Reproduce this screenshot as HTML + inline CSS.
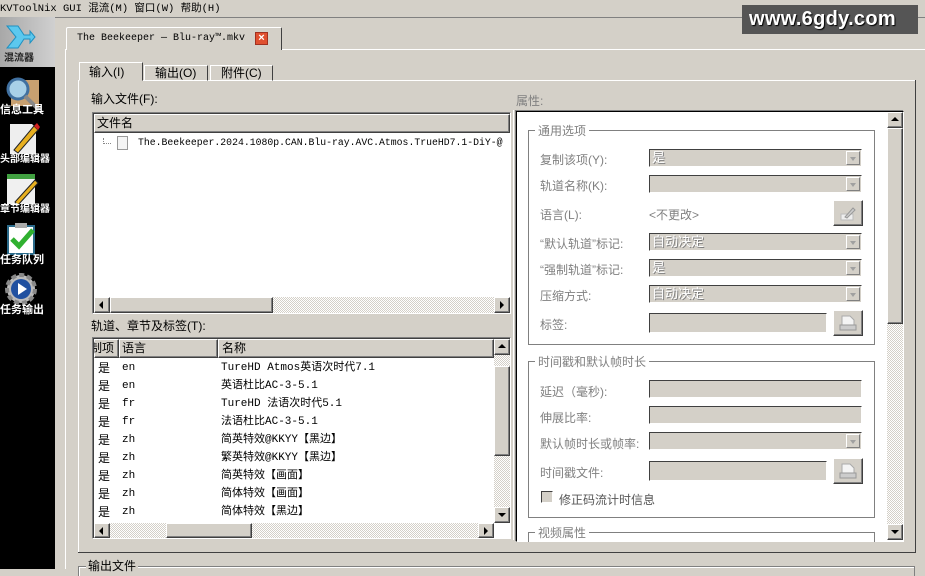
<!DOCTYPE html>
<html><head><meta charset="utf-8"><style>
*{box-sizing:border-box;margin:0;padding:0}
body{width:925px;height:569px;overflow:hidden;background:#d4d0c8;position:relative;font-family:"Liberation Sans","Noto Sans CJK SC",sans-serif;font-size:12px;color:#000}
.a{position:absolute}
.t{position:absolute;white-space:nowrap;line-height:14px}
.sunk{border:1px solid;border-color:#808080 #fff #fff #808080;box-shadow:inset 1px 1px 0 #404040}
.btn{background:#d4d0c8;border:1px solid;border-color:#fff #404040 #404040 #fff;box-shadow:inset -1px -1px 0 #808080}
.track{background:repeating-conic-gradient(#d4d0c8 0 25%,#fff 0 50%) 0 0/2px 2px}
.combo{position:absolute;height:18px;background:#d4d0c8;border:1px solid;border-color:#404040 #fff #fff #404040;color:#fff;font-size:13px;line-height:15px;padding-left:2px;text-shadow:1px 1px 0 #808080}
.combo .dd{position:absolute;right:1px;top:1px;width:14px;height:14px;background:#d4d0c8;border:1px solid;border-color:#fff #808080 #808080 #fff}
.combo .dd:after{content:"";position:absolute;left:3px;top:5px;border:3px solid transparent;border-top:4px solid #a0a0a0}
.lbl{position:absolute;color:#808080;font-size:12px;white-space:nowrap}
.row{position:absolute;left:0;height:18px;font-size:11px;line-height:18px;white-space:nowrap}
.mono{font-family:"Liberation Mono","Noto Sans CJK SC",monospace}
</style></head><body>
<!-- menu -->
<div class="t" style="left:0;top:2px;font-family:'Liberation Mono','Noto Sans CJK SC',monospace;font-size:10.5px">KVToolNix GUI&nbsp;混流(M)&nbsp;窗口(W)&nbsp;帮助(H)</div>
<div class="a" style="left:55px;top:17px;width:870px;height:1px;background:#808080"></div>
<div class="a" style="left:742px;top:5px;width:176px;height:29px;background:#555"></div>
<div class="t" style="left:749px;top:9px;color:#fff;font-weight:bold;font-size:20px;line-height:20px;letter-spacing:0.3px;text-shadow:1px 1px 1px #000">www.6gdy.com</div>

<!-- sidebar -->
<div class="a" style="left:0;top:17px;width:55px;height:552px;background:#000"></div>
<div class="a" style="left:0;top:17px;width:55px;height:50px;background:linear-gradient(90deg,#a8a8a8,#d0d0d0)"></div>
<svg class="a" style="left:4px;top:22px" width="32" height="30"><path d="M3 4 L14 4 L20 13 L26 13 L26 9 L31 15 L26 21 L26 17 L20 17 L14 26 L3 26 L12 15 Z" fill="#5cc8ee" stroke="#2090c0"/></svg>
<div class="t" style="left:4px;top:52px;color:#222;font-size:10px;font-weight:bold">混流器</div>
<svg class="a" style="left:3px;top:74px" width="38" height="40"><rect x="8" y="6" width="28" height="26" fill="#c8a070"/><circle cx="15" cy="15" r="10" fill="#a8d0e8" stroke="#4070a0" stroke-width="3"/><line x1="22" y1="22" x2="36" y2="36" stroke="#888" stroke-width="4"/></svg>
<div class="t" style="left:0;top:103px;color:#fff;font-size:11px;font-weight:bold">信息工具</div>
<svg class="a" style="left:6px;top:120px" width="34" height="36"><path d="M4 4 H26 L30 8 V34 H4Z" fill="#eee"/><path d="M8 30 L28 6 L32 10 L12 33Z" fill="#e8b020" stroke="#222"/><path d="M28 6 L31 3 L34 7 L32 10Z" fill="#d02020"/></svg>
<div class="t" style="left:0;top:153px;color:#fff;font-size:10px;font-weight:bold">头部编辑器</div>
<svg class="a" style="left:5px;top:172px" width="34" height="34"><rect x="2" y="4" width="28" height="28" fill="#f0f0f0"/><rect x="2" y="2" width="28" height="5" fill="#40a040"/><path d="M10 30 L30 8 L33 11 L13 33Z" fill="#e8b020" stroke="#222"/></svg>
<div class="t" style="left:0;top:203px;color:#fff;font-size:10px;font-weight:bold">章节编辑器</div>
<svg class="a" style="left:6px;top:222px" width="30" height="34"><rect x="2" y="4" width="26" height="28" fill="#fff" stroke="#2a6a8a" stroke-width="2"/><rect x="9" y="1" width="12" height="5" fill="#aaa"/><path d="M6 17 L13 24 L27 8" fill="none" stroke="#30b030" stroke-width="5"/></svg>
<div class="t" style="left:0;top:253px;color:#fff;font-size:11px;font-weight:bold">任务队列</div>
<svg class="a" style="left:3px;top:272px" width="36" height="34"><circle cx="18" cy="17" r="14" fill="#bbb" stroke="#888" stroke-width="4" stroke-dasharray="5 3"/><circle cx="18" cy="17" r="10" fill="#2050a0"/><path d="M15 11 L24 17 L15 23Z" fill="#fff"/></svg>
<div class="t" style="left:0;top:303px;color:#fff;font-size:11px;font-weight:bold">任务输出</div>

<!-- doc tab & panel -->
<div class="a" style="left:65px;top:49px;width:870px;height:1px;background:#fff"></div>
<div class="a" style="left:65px;top:49px;width:1px;height:520px;background:#fff"></div>
<div class="a" style="left:66px;top:27px;width:216px;height:23px;background:#d4d0c8;border-left:1px solid #fff;border-top:1px solid #fff;border-right:1px solid #404040;border-radius:2px 2px 0 0"></div>
<div class="t mono" style="left:77px;top:32px;font-size:10px">The Beekeeper — Blu-ray™.mkv</div>
<div class="a" style="left:255px;top:32px;width:13px;height:13px;background:#e05030;border:1px solid #a03020;color:#fff;font-size:11px;line-height:10px;text-align:center;font-weight:bold">×</div>

<!-- inner tabs -->
<div class="a" style="left:78px;top:80px;width:837px;height:1px;background:#fff"></div>
<div class="a" style="left:78px;top:80px;width:1px;height:473px;background:#fff"></div>
<div class="a" style="left:78px;top:552px;width:837px;height:1px;background:#404040"></div>
<div class="a" style="left:915px;top:80px;width:1px;height:473px;background:#404040"></div>
<div class="a" style="left:79px;top:62px;width:64px;height:19px;background:#d4d0c8;border:1px solid;border-color:#fff #404040 transparent #fff"></div>
<div class="a" style="left:144px;top:65px;width:64px;height:16px;border:1px solid;border-color:#fff #404040 transparent #fff"></div>
<div class="a" style="left:210px;top:65px;width:63px;height:16px;border:1px solid;border-color:#fff #404040 transparent #fff"></div>
<div class="t" style="left:89px;top:65px">输入(I)</div>
<div class="t" style="left:155px;top:66px">输出(O)</div>
<div class="t" style="left:221px;top:66px">附件(C)</div>

<!-- input files -->
<div class="t" style="left:91px;top:92px">输入文件(F):</div>
<div class="a sunk" style="left:92px;top:112px;width:419px;height:202px;background:#fff"></div>
<div class="a btn" style="left:94px;top:114px;width:416px;height:19px"></div>
<div class="t" style="left:97px;top:116px">文件名</div>
<div class="a" style="left:103px;top:138px;width:8px;height:6px;border-left:1px dotted #888;border-bottom:1px dotted #888"></div>
<div class="a" style="left:117px;top:136px;width:11px;height:14px;border:1px solid #999;background:#f4f4f4"></div>
<div class="a" style="left:136px;top:134px;width:374px;height:16px;overflow:hidden"><div class="t mono" style="left:2px;top:2px;font-size:9.8px">The.Beekeeper.2024.1080p.CAN.Blu-ray.AVC.Atmos.TrueHD7.1-DiY-@</div></div>
<div class="a track" style="left:94px;top:297px;width:416px;height:16px"></div>
<div class="a btn" style="left:94px;top:297px;width:16px;height:16px"></div>
<div class="a" style="left:99px;top:301px;border:4px solid transparent;border-right:4px solid #000;border-left:0"></div>
<div class="a btn" style="left:110px;top:297px;width:163px;height:16px"></div>
<div class="a btn" style="left:494px;top:297px;width:16px;height:16px"></div>
<div class="a" style="left:500px;top:301px;border:4px solid transparent;border-left:4px solid #000;border-right:0"></div>

<!-- tracks -->
<div class="t" style="left:91px;top:319px">轨道、章节及标签(T):</div>
<div class="a sunk" style="left:92px;top:337px;width:419px;height:202px;background:#fff"></div>
<div class="a btn" style="left:94px;top:339px;width:25px;height:19px"></div>
<div class="a btn" style="left:119px;top:339px;width:99px;height:19px"></div>
<div class="a btn" style="left:218px;top:339px;width:276px;height:19px"></div>
<div class="a" style="left:94px;top:341px;width:24px;height:15px;overflow:hidden"><div class="t" style="left:-4px;top:0">制项</div></div>
<div class="t" style="left:122px;top:341px">语言</div>
<div class="t" style="left:222px;top:341px">名称</div>
<div class="a" style="left:94px;top:359px;width:400px;height:162px">
<div class="row" style="top:0"><span style="position:absolute;left:4px;font-size:12px">是</span><span class="mono" style="position:absolute;left:28px">en</span><span class="mono" style="position:absolute;left:127px">TureHD Atmos英语次时代7.1</span></div>
<div class="row" style="top:18px"><span style="position:absolute;left:4px;font-size:12px">是</span><span class="mono" style="position:absolute;left:28px">en</span><span class="mono" style="position:absolute;left:127px">英语杜比AC-3-5.1</span></div>
<div class="row" style="top:36px"><span style="position:absolute;left:4px;font-size:12px">是</span><span class="mono" style="position:absolute;left:28px">fr</span><span class="mono" style="position:absolute;left:127px">TureHD 法语次时代5.1</span></div>
<div class="row" style="top:54px"><span style="position:absolute;left:4px;font-size:12px">是</span><span class="mono" style="position:absolute;left:28px">fr</span><span class="mono" style="position:absolute;left:127px">法语杜比AC-3-5.1</span></div>
<div class="row" style="top:72px"><span style="position:absolute;left:4px;font-size:12px">是</span><span class="mono" style="position:absolute;left:28px">zh</span><span class="mono" style="position:absolute;left:127px">简英特效@KKYY【黑边】</span></div>
<div class="row" style="top:90px"><span style="position:absolute;left:4px;font-size:12px">是</span><span class="mono" style="position:absolute;left:28px">zh</span><span class="mono" style="position:absolute;left:127px">繁英特效@KKYY【黑边】</span></div>
<div class="row" style="top:108px"><span style="position:absolute;left:4px;font-size:12px">是</span><span class="mono" style="position:absolute;left:28px">zh</span><span class="mono" style="position:absolute;left:127px">简英特效【画面】</span></div>
<div class="row" style="top:126px"><span style="position:absolute;left:4px;font-size:12px">是</span><span class="mono" style="position:absolute;left:28px">zh</span><span class="mono" style="position:absolute;left:127px">简体特效【画面】</span></div>
<div class="row" style="top:144px"><span style="position:absolute;left:4px;font-size:12px">是</span><span class="mono" style="position:absolute;left:28px">zh</span><span class="mono" style="position:absolute;left:127px">简体特效【黑边】</span></div>
</div>
<div class="a track" style="left:494px;top:339px;width:16px;height:184px"></div>
<div class="a btn" style="left:494px;top:339px;width:16px;height:16px"></div>
<div class="a" style="left:498px;top:344px;border:4px solid transparent;border-bottom:4px solid #000;border-top:0"></div>
<div class="a btn" style="left:494px;top:366px;width:16px;height:90px"></div>
<div class="a btn" style="left:494px;top:507px;width:16px;height:16px"></div>
<div class="a" style="left:498px;top:513px;border:4px solid transparent;border-top:4px solid #000;border-bottom:0"></div>
<div class="a track" style="left:94px;top:523px;width:400px;height:15px"></div>
<div class="a btn" style="left:94px;top:523px;width:16px;height:15px"></div>
<div class="a" style="left:99px;top:527px;border:4px solid transparent;border-right:4px solid #000;border-left:0"></div>
<div class="a btn" style="left:166px;top:523px;width:86px;height:15px"></div>
<div class="a btn" style="left:478px;top:523px;width:16px;height:15px"></div>
<div class="a" style="left:484px;top:527px;border:4px solid transparent;border-left:4px solid #000;border-right:0"></div>

<!-- properties -->
<div class="a" style="left:513px;top:110px;width:1px;height:430px;background:#fff"></div>
<div class="lbl" style="left:516px;top:92px">属性:</div>
<div class="a" style="left:516px;top:111px;width:388px;height:431px;background:#fff;border:1px solid #000;border-right-color:#fff;border-bottom-color:#fff;box-shadow:-1px -1px 0 #808080"></div>
<div class="a" style="left:528px;top:130px;width:347px;height:215px;border:1px solid #808080"></div>
<div class="lbl" style="left:535px;top:122px;background:#fff;padding:0 3px">通用选项</div>
<div class="lbl" style="left:540px;top:151px">复制该项(Y):</div>
<div class="combo" style="left:649px;top:149px;width:213px">是<span class="dd"></span></div>
<div class="lbl" style="left:540px;top:177px">轨道名称(K):</div>
<div class="combo" style="left:649px;top:175px;width:213px"><span class="dd"></span></div>
<div class="lbl" style="left:540px;top:206px">语言(L):</div>
<div class="lbl" style="left:649px;top:206px">&lt;不更改&gt;</div>
<div class="a btn" style="left:833px;top:200px;width:30px;height:26px"></div>
<svg class="a" style="left:840px;top:205px" width="16" height="16"><rect x="1" y="9" width="12" height="6" fill="#eee" stroke="#bbb"/><path d="M5 12 L13 3 L15 5 L7 13Z" fill="#ccc" stroke="#999"/></svg>
<div class="lbl" style="left:540px;top:235px">“默认轨道”标记:</div>
<div class="combo" style="left:649px;top:233px;width:213px">自动决定<span class="dd"></span></div>
<div class="lbl" style="left:540px;top:261px">“强制轨道”标记:</div>
<div class="combo" style="left:649px;top:259px;width:213px">是<span class="dd"></span></div>
<div class="lbl" style="left:540px;top:287px">压缩方式:</div>
<div class="combo" style="left:649px;top:285px;width:213px">自动决定<span class="dd"></span></div>
<div class="lbl" style="left:540px;top:316px">标签:</div>
<div class="combo" style="left:649px;top:313px;width:178px;height:20px"></div>
<div class="a btn" style="left:833px;top:310px;width:30px;height:26px"></div>
<svg class="a" style="left:839px;top:314px" width="18" height="18"><path d="M3 2 H11 L15 6 V11 H3Z" fill="#f4f4f4" stroke="#aaa"/><rect x="1" y="11" width="16" height="5" fill="#ccc" stroke="#999"/></svg>

<div class="a" style="left:528px;top:361px;width:347px;height:157px;border:1px solid #808080"></div>
<div class="lbl" style="left:535px;top:353px;background:#fff;padding:0 3px">时间戳和默认帧时长</div>
<div class="lbl" style="left:540px;top:383px">延迟（毫秒):</div>
<div class="combo" style="left:649px;top:380px;width:213px"></div>
<div class="lbl" style="left:540px;top:409px">伸展比率:</div>
<div class="combo" style="left:649px;top:406px;width:213px"></div>
<div class="lbl" style="left:540px;top:435px">默认帧时长或帧率:</div>
<div class="combo" style="left:649px;top:432px;width:213px"><span class="dd"></span></div>
<div class="lbl" style="left:540px;top:464px">时间戳文件:</div>
<div class="combo" style="left:649px;top:461px;width:178px;height:20px"></div>
<div class="a btn" style="left:833px;top:458px;width:30px;height:26px"></div>
<svg class="a" style="left:839px;top:462px" width="18" height="18"><path d="M3 2 H11 L15 6 V11 H3Z" fill="#f4f4f4" stroke="#aaa"/><rect x="1" y="11" width="16" height="5" fill="#ccc" stroke="#999"/></svg>
<div class="a" style="left:541px;top:491px;width:12px;height:12px;background:#d4d0c8;border:1px solid;border-color:#404040 #fff #fff #404040"></div>
<div class="lbl" style="left:559px;top:491px;color:#555">修正码流计时信息</div>
<div class="a" style="left:528px;top:532px;width:347px;height:10px;border:1px solid #808080;border-bottom:0"></div>
<div class="lbl" style="left:535px;top:524px;background:#fff;padding:0 3px">视频属性</div>

<div class="a track" style="left:887px;top:112px;width:16px;height:428px"></div>
<div class="a btn" style="left:887px;top:112px;width:16px;height:16px"></div>
<div class="a" style="left:891px;top:117px;border:4px solid transparent;border-bottom:4px solid #000;border-top:0"></div>
<div class="a btn" style="left:887px;top:128px;width:16px;height:196px"></div>
<div class="a btn" style="left:887px;top:524px;width:16px;height:16px"></div>
<div class="a" style="left:891px;top:530px;border:4px solid transparent;border-top:4px solid #000;border-bottom:0"></div>

<!-- output group -->
<div class="a" style="left:78px;top:566px;width:837px;height:10px;border:1px solid #808080;border-bottom:0;box-shadow:inset 1px 1px 0 #fff"></div>
<div class="t" style="left:86px;top:559px;background:#d4d0c8;padding:0 2px">输出文件</div>
</body></html>
